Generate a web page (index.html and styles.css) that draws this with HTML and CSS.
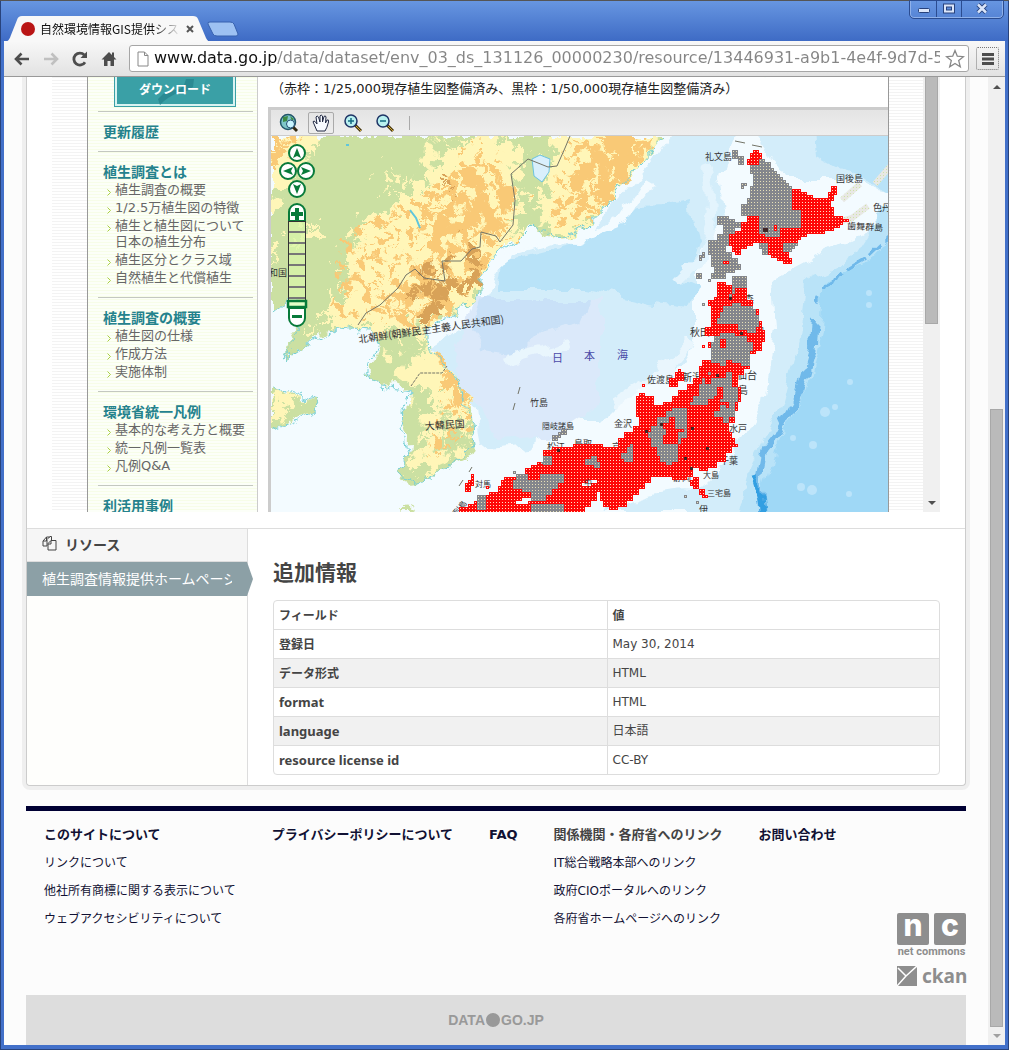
FILE: index.html
```html
<!DOCTYPE html>
<html lang="ja">
<head>
<meta charset="utf-8">
<title>自然環境情報GIS提供システム</title>
<link rel="stylesheet" href="styles.css">
</head>
<body>
<div class="window">
  <header class="titlebar">
    <div class="tab">
      <svg class="tab-shape" viewBox="0 0 206 26" preserveAspectRatio="none"><path d="M0 26C4 25 5 22 6 19L12 4Q13 0 17 0H188Q192 0 193 3L201 22Q203 26 206 26Z"/></svg>
      <span class="favicon"></span>
      <span class="tab-title">自然環境情報GIS提供システム</span>
      <button class="tab-close" aria-label="閉じる"><svg width="8" height="8" viewBox="0 0 8 8"><path d="M1 1L7 7M7 1L1 7" stroke="#555" stroke-width="2"/></svg></button>
    </div>
    <button class="new-tab" aria-label="新しいタブ"><svg width="32" height="16" viewBox="0 0 32 16"><path d="M1 3Q0 1 3 1H23Q26 1 27 3L31 13Q31 15 29 15H10Q7 15 6 13Z" fill="#9dc1f2" stroke="#3761ae"/></svg></button>
    <div class="window-buttons">
      <button aria-label="最小化"><svg width="12" height="12" viewBox="0 0 12 12"><rect x=".5" y="5.500" width="11" height="4" rx="1" fill="#dbe6fa" stroke="#28427c"/></svg></button>
      <button aria-label="最大化"><svg width="12" height="12" viewBox="0 0 12 12"><rect x="2" y="2.500" width="8" height="6" fill="none" stroke="#28427c" stroke-width="4"/><rect x="2" y="2.500" width="8" height="6" fill="none" stroke="#dbe6fa" stroke-width="2"/></svg></button>
      <button class="wide" aria-label="閉じる"><svg width="12" height="12" viewBox="0 0 12 12"><path d="M2 1.500L10 9.500M10 1.500L2 9.500" stroke="#28427c" stroke-width="4.500"/><path d="M2 1.500L10 9.500M10 1.500L2 9.500" stroke="#dbe6fa" stroke-width="2.500"/></svg></button>
    </div>
  </header>
  <nav class="toolbar">
    <button aria-label="戻る"><svg width="18" height="18" viewBox="0 0 18 18"><path d="M3 9H16M8.500 3.500L3 9L8.500 14.500" fill="none" stroke="#4d4d4d" stroke-width="2.600"/></svg></button>
    <button aria-label="進む"><svg width="18" height="18" viewBox="0 0 18 18"><path d="M2 9H15M9.500 3.500L15 9L9.500 14.500" fill="none" stroke="#c0c0c0" stroke-width="2.600"/></svg></button>
    <button aria-label="再読み込み"><svg width="18" height="18" viewBox="0 0 18 18"><path d="M14 12.200A6 6 0 1 1 13.300 5" fill="none" stroke="#4d4d4d" stroke-width="2.800"/><path d="M16 1.500V8H9.500Z" fill="#4d4d4d"/></svg></button>
    <button aria-label="ホーム"><svg width="18" height="18" viewBox="0 0 18 18"><path d="M9 2L1.500 9.500H4V16H7.500V11H10.500V16H14V9.500H16.500L14 7V2.500H12V5Z" fill="#4d4d4d"/></svg></button>
    <div class="address">
      <svg width="12" height="16" viewBox="0 0 12 16"><path d="M1 1H7.500L11 4.500V15H1ZM7.500 1V4.500H11" fill="#fff" stroke="#888"/></svg>
      <input aria-label="アドレス" type="text" value="www.data.go.jp/data/dataset/env_03_ds_131126_00000230/resource/13446931-a9b1-4e4f-9d7d-5">
      <svg width="20" height="20" viewBox="0 0 20 20"><path d="M10 1.500L12.300 7.200L18.500 7.700L13.700 11.600L15.300 17.800L10 14.400L4.700 17.800L6.300 11.600L1.500 7.700L7.700 7.200Z" fill="#fff" stroke="#888" stroke-width="1.300"/></svg>
    </div>
    <button class="menu" aria-label="メニュー"><svg width="14" height="14" viewBox="0 0 14 14"><path d="M1 2.500H13M1 7H13M1 11.500H13" stroke="#4d4d4d" stroke-width="2.800"/></svg></button>
  </nav>

  <div class="viewport">
    <div class="page">
      <main class="card">
        <section class="preview">
          <div class="site">
            <aside class="side">
              <button class="download">
                <svg width="40" height="26" viewBox="0 0 40 26"><path d="M31 0H39L38 8L30 13L20 15L13 19L9 22L5 26L3 20L8 15L16 12L25 10L29 6Z" fill="#2a8a93"/></svg>
                <span>ダウンロード</span>
              </button>
              <section><h3>更新履歴</h3></section>
              <section>
                <h3>植生調査とは</h3>
                <ul>
                  <li><a href="#">植生調査の概要</a></li>
                  <li><a href="#">1/2.5万植生図の特徴</a></li>
                  <li><a href="#">植生と植生図について<br>日本の植生分布</a></li>
                  <li><a href="#">植生区分とクラス域</a></li>
                  <li><a href="#">自然植生と代償植生</a></li>
                </ul>
              </section>
              <section>
                <h3>植生調査の概要</h3>
                <ul>
                  <li><a href="#">植生図の仕様</a></li>
                  <li><a href="#">作成方法</a></li>
                  <li><a href="#">実施体制</a></li>
                </ul>
              </section>
              <section>
                <h3>環境省統一凡例</h3>
                <ul>
                  <li><a href="#">基本的な考え方と概要</a></li>
                  <li><a href="#">統一凡例一覧表</a></li>
                  <li><a href="#">凡例Q&amp;A</a></li>
                </ul>
              </section>
              <section><h3>利活用事例</h3></section>
            </aside>
            <div class="map-column">
              <p class="map-note">整備された植生図を表示した範囲です。整備区域は、全国の整備状況に応じて随時追加していきます。<br>（赤枠：1/25,000現存植生図整備済み、黒枠：1/50,000現存植生図整備済み）</p>
              <div class="map-frame">
                <div class="map-tools">
                  <button aria-label="全体表示"><svg width="20" height="20" viewBox="0 0 20 20"><circle cx="9" cy="9" r="7.500" fill="#7ec6c9" stroke="#22566a" stroke-width="1.500"/><path d="M4 4L9 3L8 8L4 9ZM11 3L15 6L13 8Z" fill="#3d8a45"/><path d="M14 14L18 18" stroke="#312a14" stroke-width="3"/><circle cx="11.500" cy="11" r="4" fill="#c7f5ff" stroke="#234b70"/></svg></button>
                  <button class="on" aria-label="移動"><svg width="20" height="20" viewBox="0 0 20 20"><path d="M6 18L3 11Q1 8 3 8Q4 8 6 11L5 4Q6 2 7.500 4L9 9L9 3Q10 1 11.500 3V9L13 3.500Q14.500 2 15 4L14.500 10L16 7Q18 6 17.500 9Q16 15 14 18Z" fill="#f7faff" stroke="#222a44"/></svg></button>
                  <button aria-label="拡大"><svg width="20" height="20" viewBox="0 0 20 20"><path d="M12 12L18 18" stroke="#47370d" stroke-width="3"/><path d="M13 13L18 18" stroke="#d5a936"/><circle cx="8" cy="8" r="6" fill="#b8f0f0" stroke="#1f3566" stroke-width="1.500"/><path d="M5 8H11M8 5V11" stroke="#146a80" stroke-width="1.500"/></svg></button>
                  <button aria-label="縮小"><svg width="20" height="20" viewBox="0 0 20 20"><path d="M12 12L18 18" stroke="#47370d" stroke-width="3"/><path d="M13 13L18 18" stroke="#d5a936"/><circle cx="8" cy="8" r="6" fill="#b8f0f0" stroke="#1f3566" stroke-width="1.500"/><path d="M5 8H11" stroke="#146a80" stroke-width="1.500"/></svg></button>
                  <span class="divider"></span>
                </div>
                <svg class="map" viewBox="271 136 617 376" preserveAspectRatio="xMinYMin slice" role="img" aria-label="植生図整備状況の地図">
                  <defs>
                    <pattern id="red" width="3" height="3" patternUnits="userSpaceOnUse"><rect width="3" height="3" fill="#ff0808"/><rect x="1" y="1" width="1" height="1" fill="#ffe0c4"/></pattern>
                    <pattern id="grey" width="3" height="3" patternUnits="userSpaceOnUse"><rect width="3" height="3" fill="#84868c"/><rect x="1" y="1" width="1" height="1" fill="#e6dfb8"/></pattern>
                    <pattern id="pale" width="3" height="3" patternUnits="userSpaceOnUse"><rect width="3" height="3" fill="#e8e8e4"/><rect x="1" y="1" width="1" height="1" fill="#cfe3a8"/></pattern>
                    <filter id="coast" x="-5%" y="-5%" width="110%" height="110%"><feTurbulence type="fractalNoise" baseFrequency=".09" numOctaves="4" seed="4"/><feDisplacementMap in="SourceGraphic" scale="14" xChannelSelector="R" yChannelSelector="G"/></filter>
                    <filter id="hills" x="-10%" y="-10%" width="120%" height="120%"><feTurbulence type="fractalNoise" baseFrequency=".08" numOctaves="5" seed="9"/><feDisplacementMap in="SourceGraphic" scale="50" xChannelSelector="R" yChannelSelector="G"/></filter>
                    <filter id="specks" x="0" y="0" width="100%" height="100%"><feTurbulence type="fractalNoise" baseFrequency=".06" numOctaves="5" seed="14"/><feColorMatrix values="0 0 0 0 0 0 0 0 0 0 0 0 0 0 0 24 0 0 0 -13"/><feComposite in="SourceGraphic" operator="in"/></filter>
                    <filter id="specks-fine" x="0" y="0" width="100%" height="100%"><feTurbulence type="fractalNoise" baseFrequency=".11" numOctaves="4" seed="31"/><feColorMatrix values="0 0 0 0 0 0 0 0 0 0 0 0 0 0 0 24 0 0 0 -13.500"/><feComposite in="SourceGraphic" operator="in"/></filter>
                    <filter id="sea" x="-10%" y="-10%" width="120%" height="120%"><feTurbulence type="fractalNoise" baseFrequency=".035" numOctaves="4" seed="3"/><feDisplacementMap in="SourceGraphic" scale="20" xChannelSelector="R" yChannelSelector="G"/></filter>
                    <clipPath id="land"><path d="M271 136H665L655 148L640 163L630 177L614 190L612 202L600 213L585 228L570 238L556 240L545 236L536 224L529 226L520 240L505 244L500 250L490 262L480 277L480 294L470 302L455 312L440 318L426 330L426 345L446 362L459 382L470 400L473 425L475 446L472 456L450 466L435 475L420 483L405 484L399 475L409 456L410 440L401 412L411 404L412 392L397 385L380 387L366 375L376 362L380 340L370 331L340 328L320 335L305 345L284 358L291 334L302 322L303 308L290 296L271 312ZM271 388L285 393L300 398L318 400L315 412L295 418L273 432H271ZM400 512Q406 504 415 510L412 512Z"/></clipPath>
                  </defs>
                  <rect x="260" y="120" width="680" height="400" fill="#f3fbff"/>
                  <g filter="url(#sea)">
                    <path d="M690 110H920V530H700L690 500L735 455L765 400L775 330L772 280L810 260L860 235L900 205L900 190L845 180L790 180L760 136Z" fill="#d3edfa"/>
                    <path d="M815 110H920V200L855 175L818 155Z" fill="#b9e3f8"/>
                    <path d="M880 210H920V530H735L750 470L785 400L800 340L805 280L850 258Z" fill="#b9e3f8"/>
                    <path d="M905 225H920V530H755L775 450L808 385L822 330L826 280L870 262Z" fill="#9fd8f6"/>
                    <path d="M680 120L735 130L720 180L725 215L695 255L695 340L680 365L635 385L600 420L560 420L530 445L480 450L475 410L430 350L480 310L510 255L590 235L650 165Z" fill="#d3edfa"/>
                    <path d="M668 205L690 200L696 245L682 282L700 290L690 310L650 305L585 290H500L505 262L570 246L610 226L640 206Z" fill="#b9e3f8"/>
                    <path d="M475 300H600L600 405L555 435L500 440L480 410L450 360Z" fill="#dbe9fa"/>
                    <path d="M480 300H590L580 325L540 335L520 355L485 350L470 330Z" fill="#c9e1f8"/>
                    <path d="M500 250L540 240L580 241L620 225L648 180" fill="none" stroke="#f3fbff" stroke-width="8"/>
                    <path d="M706 165Q720 200 700 260L680 280" fill="none" stroke="#e3f4fd" stroke-width="10"/>
                    <path d="M568 343L505 360M690 340L660 375L615 400" fill="none" stroke="#e9f6fd" stroke-width="9"/>
                    <path d="M605 512Q650 485 700 490L720 512Z" fill="#d3edfa"/>
                    <path d="M814 318L812 350L800 393L776 438L765 452L760 480L765 530" fill="none" stroke="#6fb9ea" stroke-width="6"/>
                    <path d="M905 222L870 256L832 279L820 300" fill="none" stroke="#6fb9ea" stroke-width="4" stroke-dasharray="22 6"/>
                    <path d="M756 480L762 500L765 530" fill="none" stroke="#329fe2" stroke-width="5"/>
                  </g>
                  <g fill="#bce4fa"><circle cx="869" cy="305" r="3"/><circle cx="825" cy="412" r="5"/><circle cx="835" cy="407" r="3"/><circle cx="850" cy="382" r="3"/><circle cx="793" cy="438" r="3"/><circle cx="813" cy="445" r="4"/><circle cx="801" cy="487" r="4"/><circle cx="812" cy="490" r="5"/><circle cx="849" cy="494" r="3"/><circle cx="869" cy="293" r="3"/></g>
                  <g filter="url(#coast)"><g clip-path="url(#land)">
                    <rect x="260" y="120" width="420" height="400" fill="#cbe0a2"/>
                    <g filter="url(#hills)">
                      <path d="M250 110H325L310 160L285 185L271 210L250 210ZM450 150L500 136L525 150L518 180L520 235L480 300L440 320L400 335L330 325L310 330L345 290L345 260L365 225L390 205L420 185ZM555 120H660L640 185L595 225L550 240L540 215L550 180ZM385 170L400 178L390 190L378 182ZM300 225H322V240H300ZM270 240L282 250L275 275ZM430 325L450 345L485 425L470 445L450 400L430 475L410 470L440 400L400 375L425 350ZM271 395H300L290 410L271 420Z" fill="#fff6b8"/>
                      <path d="M250 110H300L285 150L255 165ZM465 145L485 170L515 185L510 225L470 255L450 300L430 320L400 322L385 305L425 270L430 215L455 185ZM600 110L655 140L620 190L580 215L570 185L585 155ZM440 335L455 365L478 415L455 405L440 370Z" fill="#f9c976"/>
                      <path d="M440 255L475 240L485 270L465 295L440 325L420 320L412 295ZM445 175L460 185L448 200Z" fill="#d8a258"/>
                    </g>
                    <path d="M271 136H320L290 200H271ZM430 136H520V230L480 300L440 330L330 325L350 270L400 205ZM555 136H665L590 235L540 232ZM425 330L475 400L475 450L410 480V400L380 350ZM271 390H310L280 425Z" fill="#fff6b8" filter="url(#specks)"/>
                    <path d="M340 240L440 180L500 150L515 230L440 330L330 322ZM560 140H655L590 230L550 225ZM271 136H310L285 165H271ZM425 335L470 400L472 430L430 465L420 450L450 390Z" fill="#f9c976" filter="url(#specks-fine)"/>
                  </g>
                  <path d="M665 136L640 163L614 190L612 202L585 228L556 240L536 224L520 240L500 250L480 277L480 294L455 312L426 330L426 345L459 382L473 425L475 446L450 466L420 483L399 475L409 456L401 412L412 392L380 387L366 375L380 340L370 331L340 328L305 345L284 358L302 322L303 308L290 296L271 312M271 388L318 400L315 412L271 432" fill="none" stroke="#79d0d5"/></g>
                  <path d="M532 159L540 155L550 159L549 172L542 182L534 176Z" fill="#d9effc" stroke="#6bc3e0"/>
                  <path d="M410 210L416 218L420 228M346 145H349" fill="none" stroke="#5fc6dc" stroke-width="2"/>
                  <g fill="none" stroke="#737467"><path d="M570 136L565 148L557 166L548 167L528 159L511 174L515 200L513 225L500 242L496 236L481 232L480 247L472 249L461 261H442L445 281L424 278L415 269L406 275L398 288L380 305L366 313L358 325"/><path d="M411 386L420 373H442L447 366" stroke-dasharray="3 1"/><path d="M735 141L745 143M752 145L762 147M520 387L518 394M515 403L513 410M472 467L469 472M463 480L459 486"/></g>
                  <path d="M875 184L900 155M842 200L860 184M838 222L852 218L868 206" fill="none" stroke="url(#pale)" stroke-width="6"/>
                  <g class="labels">
                    <text x="705" y="160">礼文島</text><text x="836" y="182">国後島</text><text x="873" y="211">色丹</text><text x="847" y="229" transform="rotate(3 847 229)">歯舞群島</text>
                    <text x="269" y="276">和国</text><text x="359" y="343" class="big" transform="rotate(-8 359 343)">北朝鮮(朝鮮民主主義人民共和国)</text>
                    <text x="425" y="430" class="big" transform="rotate(-4 425 430)">大韓民国</text><text x="690" y="336" class="big">秋田</text><text x="734" y="303" class="big">青森</text><text x="744" y="336" class="big">盛岡</text>
                    <text x="647" y="383">佐渡島</text><text x="682" y="381" class="big">新潟</text><text x="737" y="379" class="big">仙台</text><text x="728" y="394" class="big">福島</text><text x="530" y="406">竹島</text>
                    <text x="542" y="429" class="small">隠岐諸島</text><text x="614" y="427">金沢</text><text x="640" y="414">富山</text><text x="547" y="450">松江</text><text x="574" y="447">鳥取</text><text x="612" y="450">京</text>
                    <text x="729" y="432">水戸</text><text x="720" y="464">千葉</text><text x="673" y="481">静岡</text><text x="703" y="478" class="small">大島</text><text x="707" y="496" class="small">三宅島</text><text x="699" y="513">伊</text><text x="475" y="487" class="small">対馬</text><text x="457" y="516" class="small" transform="rotate(-50 457 516)">列島</text>
                  </g>
                  <g class="sea-name"><text x="552" y="362">日</text><text x="584" y="360">本</text><text x="617" y="359">海</text></g>
                  <g shape-rendering="crispEdges">
                    <path fill="url(#red)" d="M750 153H753V150H759V153H762V159H765V165H747V159H750ZM792 189H801V192H807V195H813V198H828V192H831V186H837V195H834V201H831V207H834V216H843V219H849V222H843V225H840V228H834V231H825V234H807V237H801V240H798V243H789V246H786V252H789V258H792V264H783V261H777V258H771V255H768V246H759V243H753V246H747V249H741V255H735V252H732V246H729V234H735V231H741V222H747V216H759V228H762V234H765V237H780V228H801V210H792ZM717 282H726V285H732V276H747V300H753V309H759V321H762V330H765V342H762V351H756V354H750V369H744V375H738V387H741V402H738V411H735V423H729V432H732V438H735V444H738V447H732V453H726V462H717V468H708V471H699V468H693V477H687V480H672V477H651V483H645V489H639V495H633V501H627V507H618V510H609V507H603V501H600V492H597V501H591V507H585V512H459V507H468V504H474V501H483V495H489V492H498V486H501V480H504V477H516V474H525V468H531V465H537V462H549V456H543V450H552V447H573V444H603V447H618V438H624V432H633V426H639V417H636V396H639V393H645V396H654V405H663V402H672V396H678V390H687V384H693V378H699V366H702V360H711V348H708V342H714V336H705V327H711V306H708V300H714V297H717ZM675 372H678V369H681V372H684V381H678V387H669V378H675ZM471 474H474V486H471V492H465V483H468V480H471ZM690 480H693V477H699V486H690ZM696 480H699V489H693V486H696ZM699 489H705V495H699ZM702 495H708V498H702ZM642 384H645V387H642ZM702 345H705V348H702ZM486 486H489V489H486Z"/>
                    <path fill="url(#grey)" d="M750 165H759V159H765V162H771V168H774V171H777V174H780V177H783V180H786V183H789V186H792V210H801V228H780V237H765V234H759V216H741V204H747V198H750V186H753V174H750ZM783 243H798V246H795V249H792V252H783ZM759 243H768V255H762V249H759ZM717 216H729V219H735V222H741V228H735V234H729V246H726V252H732V258H738V264H741V270H735V273H726V279H711V273H714V267H711V255H708V240H717V234H723V225H717ZM732 150H738V156H744V165H738V159H732ZM741 183H747V186H744V189H741ZM702 252H705V258H702V261H699V255H702ZM696 273H702V279H696ZM708 279H711V282H708ZM702 303H705V306H702ZM732 276H747V288H735V294H732V300H729V294H732ZM720 312H723V306H732V303H741V306H753V309H756V315H759V327H756V333H747V330H738V324H717V318H720ZM711 342H714V336H720V333H735V336H747V342H753V351H750V366H741V363H732V360H726V366H720V363H711ZM702 378H708V372H720V378H726V372H732V387H738V402H735V408H729V402H720V396H714V399H708V405H690V402H693V396H699V384H702ZM714 411H720V405H726V408H735V417H729V423H723V417H714ZM657 417H666V411H672V408H687V438H681V444H678V462H672V465H666V462H660V456H657V447H651V438H648V432H651V426H657ZM627 447H630V444H633V462H624V459H621V453H627ZM585 459H591V456H597V462H600V468H594V465H585ZM516 474H528V480H540V474H564V483H558V489H552V495H546V501H531V492H522V489H513V480H516ZM531 504H564V512H531ZM477 495H486V510H477ZM540 462H543V456H552V465H543ZM561 429H567V435H561V438H558V441H552V435H558V432H561ZM513 471H516V474H513ZM684 495H687V498H684ZM696 501H699V504H696Z"/>
                    <path fill="url(#red)" d="M663 423H669V417H675V429H684V432H678V444H663V435H666V429H663ZM720 339H726V348H720ZM723 261H729V264H723ZM705 375H711V372H720V378H711V384H705ZM717 387H723V399H717ZM774 225H777V231H774Z"/>
                    <path fill="#f3fbff" d="M516 501H522V498H531V501H528V504H516ZM582 483H588V480H597V483H591V486H582Z"/>
                  </g>
                  <path d="M684 457H687V460H684ZM660 423H663V426H660ZM645 430H648V433H645ZM706 447H709V450H706ZM690 467H693V470H690ZM557 449H560V452H557ZM716 374H719V377H716ZM691 427H694V430H691ZM729 297H732V300H729ZM740 332H743V335H740ZM763 228H768V232H763Z" fill="#412525"/>
                  <text x="584" y="486" class="small">中</text>
                  <g fill="#fff" stroke="#087a3a" stroke-width="2"><circle cx="297" cy="153" r="8"/><circle cx="288" cy="171" r="8"/><circle cx="306" cy="171" r="8"/><circle cx="297" cy="189" r="8"/><path d="M289 221V212A8 8 0 0 1 305 212V221ZM289 308V318A8 8 0 0 0 305 318V308Z"/></g>
                  <path d="M297 148L301 158L297 156L293 158ZM297 194L293 184L297 186L301 184ZM283 171L293 167L291 171L293 175ZM311 171L301 167L303 171L301 175ZM291 212H295V208H299V212H303V216H299V220H295V216H291ZM292 315H302V318H292Z" fill="#087a3a"/>
                  <rect x="288.500" y="221.500" width="17" height="79" fill="#d8f5a8" fill-opacity=".75" stroke="#333"/>
                  <path d="M289 232H305M289 243H305M289 254H305M289 265H305M289 276H305M289 287H305M289 298H305" stroke="#777" stroke-width="2"/>
                  <rect x="288" y="301" width="18" height="6" fill="#e4ffc8" stroke="#087a3a" stroke-width="2.500"/>
                </svg>
              </div>
            </div>
          </div>
          <div class="scrollbar inner"><div class="thumb"></div><svg width="8" height="4" viewBox="0 0 8 4"><path d="M0 0H8L4 4Z" fill="#505050"/></svg></div>
        </section>
        <div class="details">
          <aside class="resources">
            <h2><svg width="15" height="15" viewBox="0 0 15 15"><path d="M5 3.500L8 .5H9.500V4M5 3.500V10H1V5L4.500 1H8M1 5H4.500V1M9 4.500H14V14H6V7.500L9 4.500V8H6" fill="none" stroke="#444"/></svg>リソース</h2>
            <a class="active" href="#"><span>植生調査情報提供ホームページ</span></a>
          </aside>
          <section class="extra">
            <h1>追加情報</h1>
            <table>
              <thead><tr><th scope="col">フィールド</th><th scope="col">値</th></tr></thead>
              <tbody>
                <tr><th scope="row">登録日</th><td>May 30, 2014</td></tr>
                <tr><th scope="row">データ形式</th><td>HTML</td></tr>
                <tr><th scope="row" class="latin">format</th><td>HTML</td></tr>
                <tr><th scope="row" class="latin">language</th><td>日本語</td></tr>
                <tr><th scope="row" class="latin">resource license id</th><td>CC-BY</td></tr>
              </tbody>
            </table>
          </section>
        </div>
      </main>
      <footer class="footer">
        <div class="footer-main">
          <div class="footer-links">
            <ul>
              <li><a href="#">このサイトについて</a></li><li><a href="#">リンクについて</a></li><li><a href="#">他社所有商標に関する表示について</a></li><li><a href="#">ウェブアクセシビリティについて</a></li>
            </ul>
            <ul><li><a href="#">プライバシーポリシーについて</a></li></ul>
            <ul><li><a href="#">FAQ</a></li></ul>
            <ul>
              <li class="plain">関係機関・各府省へのリンク</li><li><a href="#">IT総合戦略本部へのリンク</a></li><li><a href="#">政府CIOポータルへのリンク</a></li><li><a href="#">各府省ホームページへのリンク</a></li>
            </ul>
            <ul><li><a href="#">お問い合わせ</a></li></ul>
          </div>
          <div class="logos">
            <a class="nc" href="#"><span class="tiles"><b>n</b><b>c</b></span><span class="nc-name">net commons</span></a>
            <a class="ckan" href="#"><svg width="20" height="20" viewBox="0 0 20 20"><path d="M0 0H20V20H0Z" fill="#8e8e8e"/><path d="M1 2L9 10L20 0M0 20L9 10" fill="none" stroke="#fff" stroke-width="1.500"/></svg>ckan</a>
          </div>
        </div>
        <div class="brand">DATA<i></i>GO.JP</div>
      </footer>
    </div>
    <div class="scrollbar outer"><svg width="8" height="4" viewBox="0 0 8 4"><path d="M0 4H8L4 0Z" fill="#505050"/></svg><div class="thumb"></div><svg width="8" height="4" viewBox="0 0 8 4"><path d="M0 0H8L4 4Z" fill="#a0a0a0"/></svg></div>
  </div>
</div>
</body>
</html>
```
FILE: styles.css
```css
* { box-sizing: border-box; }
body { margin: 0; font: 12px/18px "DejaVu Sans", "Noto Sans CJK JP", sans-serif; color: #444; }
h1, h2, h3, p, ul { margin: 0; padding: 0; }
ul { list-style: none; }
a { color: inherit; text-decoration: none; }
button { margin: 0; padding: 0; border: 0; background: none; font: inherit; }
svg { display: block; flex: none; }

.window { min-height: 100vh; display: flex; flex-direction: column; padding: 0 4px 5px; background: #4270c9; border-top: 1px solid #555; box-shadow: inset 1px 0 #28437c, inset -1px 0 #28437c, inset 0 -1px #28437c; }
.titlebar { display: flex; height: 40px; margin: 0 -3px; padding: 0 5px 0 4px; background: linear-gradient(#6796e1, #3e6bc5); }
.tab { position: relative; display: flex; align-items: center; width: 206px; height: 26px; margin-top: 15px; padding: 0 12px 0 16px; gap: 5px; }
.tab-shape { position: absolute; left: 0; top: 0; width: 206px; height: 26px; fill: #f8f8f8; }
.favicon { position: relative; width: 14px; height: 14px; border-radius: 7px; background: #b91515; flex: none; }
.tab-title { position: relative; flex: 1; overflow: hidden; white-space: nowrap; font: 12px/18px "Noto Sans CJK JP", sans-serif; color: #111; mask-image: linear-gradient(to right, #000 115px, transparent); }
.tab-close { position: relative; margin-right: 5px; }
.new-tab { align-self: flex-start; margin: 20px 0 0 -4px; }
.window-buttons { display: flex; margin-left: auto; height: 17px; border: 1px solid #8fb1ea; outline: 1px solid #2b4c90; border-top: 0; border-radius: 0 0 4px 4px; }
.window-buttons button { display: grid; place-items: center; width: 25px; }
.window-buttons button + button { border-left: 1px solid #2b4c90; }
.window-buttons .wide { width: 41px; }

.toolbar { display: flex; align-items: center; height: 36px; padding: 0 6px 0 9px; gap: 11px; background: linear-gradient(#f8f8f8, #e2e2e2); border-bottom: 1px solid #999; }
.address { flex: 1; display: flex; align-items: center; min-width: 0; height: 27px; padding: 0 3px 0 7px; gap: 5px; border: 1px solid #a6a6a6; border-radius: 3px; background: #fff; }
.address input { flex: 1; min-width: 0; height: 23px; padding: 0 0 2px; border: 0; outline: 0; font: 16px/22px "DejaVu Sans", sans-serif; background: linear-gradient(to right, #111 123px, #858585 123px); background-clip: text; -webkit-background-clip: text; -webkit-text-fill-color: transparent; }
.menu { display: grid; place-items: center; width: 23px; height: 23px; margin-left: -4px; border: 1px dotted #777; border-radius: 2px; }

.viewport { flex: 1; display: flex; overflow: hidden; }
.page { flex: 1; min-width: 0; display: flex; flex-direction: column; padding: 0 22px; background: #fcfcfc; }
.scrollbar { display: flex; flex-direction: column; align-items: center; flex: none; width: 17px; background: #f0f0f0; }
.thumb { width: 13px; background: #bababa; border: 1px solid #a8a8a8; }
.outer { padding: 8px 0 7px; justify-content: space-between; }
.outer .thumb { height: 618px; margin: auto 0 7px; }
.inner { justify-content: space-between; padding-bottom: 7px; }
.inner .thumb { height: 247px; border-top: 0; }

.card { background: #fff; border: 1px solid #ccc; border-top: 0; border-radius: 0 0 4px 4px; box-shadow: 0 0 0 4px #efefef; }
.preview { display: flex; height: 435px; margin: 0 25px 16px; overflow: hidden; }
.site { flex: 1; min-width: 0; display: flex; padding: 0 34px 0 35px; background: repeating-linear-gradient(#f3f3f3 0 1px, #fff 1px 3px); }
.side { flex: none; width: 171px; padding: 0 4px 0 10px; border-left: 1px solid #999; border-right: 1px solid #ccc; background: repeating-linear-gradient(#f7fde8 0 1px, #fcfff8 1px 3px); }
.side section { border-top: 1px solid #c4c8c0; padding: 9px 0 10px 5px; }
.side h3 { font: bold 14px/20px "Noto Sans CJK JP", sans-serif; color: #24828c; }
.side li { padding: 1px 0 1px 12px; font: 13px/16px "DejaVu Sans", "Noto Sans CJK JP", sans-serif; color: #666; white-space: nowrap; background: url("data:image/svg+xml,%3Csvg xmlns='http://www.w3.org/2000/svg' width='4' height='7'%3E%3Cpath d='M.5 .5L3.500 3.500L.5 6.500' fill='none' stroke='%23aacf45'/%3E%3C/svg%3E") 4px 8px no-repeat; }
.download { display: grid; place-items: center; width: 122px; height: 30px; margin: 0 0 4px 16px; border: 1px solid #3aa0a6; border-top: 0; background: #3aa0a6; box-shadow: inset 0 -2px #d9f3f1, inset 2px 0 #d9f3f1, inset -2px 0 #d9f3f1; }
.download svg, .download span { grid-area: 1 / 1; }
.download span { padding-bottom: 6px; font: bold 12px/18px "Noto Sans CJK JP", sans-serif; color: #fff; }
.map-column { flex: 1; min-width: 0; display: flex; flex-direction: column; padding-left: 10px; background: #fff; border-right: 1px solid #999; }
.map-note { display: grid; align-content: end; height: 30px; padding: 0 0 9px 3px; overflow: hidden; font: 13px/18px "DejaVu Sans", "Noto Sans CJK JP", sans-serif; color: #222; white-space: nowrap; }
.map-frame { flex: 1; display: flex; flex-direction: column; border: 3px solid #ccc; border-width: 3px 0 0 3px; min-height: 0; }
.map-tools { flex: none; display: flex; align-items: center; height: 26px; padding-left: 5px; gap: 6px; background: linear-gradient(#e4e4e4, #eee); border-bottom: 1px solid #ccc; }
.map-tools button { display: grid; place-items: center; width: 26px; height: 22px; border-radius: 2px; }
.map-tools .on { border: 1px solid #aaa; }
.divider { height: 14px; border-left: 1px solid #aaa; margin-left: 5px; }
.map { flex: 1; width: 100%; min-height: 0; }
.map text { font: 9px "Noto Sans CJK JP", sans-serif; fill: #333; }
.map text.big { font-size: 10px; }
.map text.small { font-size: 8px; }
.map .sea-name text { font-size: 11px; fill: #4b4ba8; }

.details { display: flex; border-top: 1px solid #ddd; }
.resources { flex: none; width: 221px; border-right: 1px solid #ddd; background: #fefefc; border-radius: 0 0 0 4px; }
.resources h2 { display: flex; align-items: center; gap: 8px; height: 33px; padding: 0 0 3px 15px; font: bold 14px/20px "Noto Sans CJK JP", sans-serif; background: #f6f6f6; border-bottom: 1px solid #ddd; }
.active { position: relative; display: block; height: 34px; padding: 6px 15px; font: 14px/20px "Noto Sans CJK JP", sans-serif; color: #fff; background: #8ca0a6; }
.active span { display: block; overflow: hidden; white-space: nowrap; }
.active::after { content: ""; position: absolute; left: 100%; top: 0; width: 6px; height: 34px; background: #8ca0a6; clip-path: polygon(0 0, 100% 50%, 0 100%); }
.extra { flex: 1; min-width: 0; padding: 28px 25px 10px; }
.extra h1 { margin-bottom: 15px; font: bold 21px/28px "Noto Sans CJK JP", sans-serif; }
table { width: 100%; table-layout: fixed; border-collapse: separate; border-spacing: 0; border: 1px solid #ddd; border-radius: 4px; }
th, td { height: 29px; padding: 0 5px; text-align: left; border-bottom: 1px solid #ddd; }
th + th, td { border-left: 1px solid #ddd; }
tbody tr:last-child > * { border-bottom: 0; height: 28px; }
tbody tr:nth-child(even) { background: #f1f1f1; }
th { font-family: "Noto Sans CJK JP", sans-serif; }
.latin { font: bold 13px/18px "Noto Sans", sans-serif; }

.footer { flex: 1; display: flex; flex-direction: column; margin-top: 20px; border-top: 5px solid #003; }
.footer-main { flex: 1; display: flex; justify-content: space-between; padding: 10px 0 8px 18px; }
.footer-links { display: flex; gap: 36px; color: #113; font: 12px/28px "DejaVu Sans", "Noto Sans CJK JP", sans-serif; white-space: nowrap; }
.footer-links li { height: 28px; }
.footer-links li:first-child { font-size: 13px; font-weight: bold; }
.footer-links .plain { color: #444; }
.logos { align-self: flex-end; display: flex; flex-direction: column; gap: 7px; color: #8e8e8e; }
.nc { width: 69px; }
.tiles { display: flex; justify-content: space-between; }
.tiles b { width: 32px; height: 32px; border-radius: 2px; background: #8e8e8e; color: #fff; text-align: center; font: 800 30px/25px Inter, sans-serif; }
.nc-name { display: block; text-align: center; font: bold 11px/13px Roboto, sans-serif; white-space: nowrap; }
.ckan { display: flex; align-items: center; gap: 5px; width: 69px; font: bold 19px/22px "Noto Sans", sans-serif; }
.brand { display: flex; align-items: center; justify-content: center; height: 50px; background: #ddd; color: #999; font: bold 14px/20px "Liberation Sans Narrow", "Liberation Sans", sans-serif; }
.brand i { width: 14px; height: 14px; margin: 0 1px; border-radius: 7px; background: #999; }
```
